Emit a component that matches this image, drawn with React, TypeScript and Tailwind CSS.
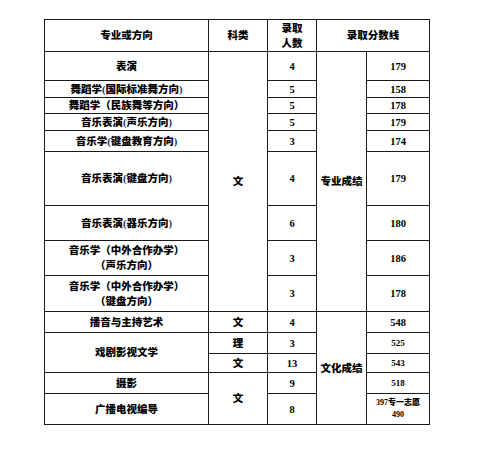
const cell = 'border border-[#1a1a1a] p-0 text-center align-middle'

function P({ children }: { children: string }) {
  // half-width brackets render with a faint blue fringe in the source
  return <span className="text-[#22306a]">{children}</span>
}

export default function App() {
  return (
    <div className="min-h-[462px] w-[484px] bg-white pl-[44px] pt-[19px] font-['Liberation_Serif','Noto_Sans_CJK_SC',serif] text-[10.5px] font-black leading-[15px] text-black">
      <table className="w-[385px] table-fixed border-collapse">
        <colgroup>
          <col className="w-[164px]" />
          <col className="w-[59px]" />
          <col className="w-[49px]" />
          <col className="w-[50px]" />
          <col className="w-[63px]" />
        </colgroup>
        <tbody>
          <tr className="h-[32px]">
            <td className={cell}>专业或方向</td>
            <td className={cell}>科类</td>
            <td className={cell}>
              录取
              <br />
              人数
            </td>
            <td className={cell} colSpan={2}>
              录取分数线
            </td>
          </tr>
          <tr className="h-[29px]">
            <td className={cell}>表演</td>
            <td className={cell} rowSpan={9}>
              文
            </td>
            <td className={cell}>4</td>
            <td className={cell} rowSpan={9}>
              专业成绩
            </td>
            <td className={cell}>179</td>
          </tr>
          <tr className="h-[17px]">
            <td className={cell}>
              舞蹈学<P>(</P>国际标准舞方向<P>)</P>
            </td>
            <td className={cell}>5</td>
            <td className={cell}>158</td>
          </tr>
          <tr className="h-[16px]">
            <td className={cell}>舞蹈学（民族舞等方向）</td>
            <td className={cell}>5</td>
            <td className={cell}>178</td>
          </tr>
          <tr className="h-[17px]">
            <td className={cell}>
              音乐表演<P>(</P>声乐方向<P>)</P>
            </td>
            <td className={cell}>5</td>
            <td className={cell}>179</td>
          </tr>
          <tr className="h-[21px]">
            <td className={cell}>
              音乐学<P>(</P>键盘教育方向<P>)</P>
            </td>
            <td className={cell}>3</td>
            <td className={cell}>174</td>
          </tr>
          <tr className="h-[54px]">
            <td className={cell}>
              音乐表演<P>(</P>键盘方向<P>)</P>
            </td>
            <td className={cell}>4</td>
            <td className={cell}>179</td>
          </tr>
          <tr className="h-[35px]">
            <td className={cell}>
              音乐表演<P>(</P>器乐方向<P>)</P>
            </td>
            <td className={cell}>6</td>
            <td className={cell}>180</td>
          </tr>
          <tr className="h-[35px]">
            <td className={cell}>
              音乐学（中外合作办学）
              <br />
              （声乐方向）
            </td>
            <td className={cell}>3</td>
            <td className={cell}>186</td>
          </tr>
          <tr className="h-[36px]">
            <td className={cell}>
              音乐学（中外合作办学）
              <br />
              （键盘方向）
            </td>
            <td className={cell}>3</td>
            <td className={cell}>178</td>
          </tr>
          <tr className="h-[21px]">
            <td className={cell}>播音与主持艺术</td>
            <td className={cell}>文</td>
            <td className={cell}>4</td>
            <td className={cell} rowSpan={5}>
              文化成绩
            </td>
            <td className={cell}>548</td>
          </tr>
          <tr className="h-[21px]">
            <td className={cell} rowSpan={2}>
              戏剧影视文学
            </td>
            <td className={cell}>理</td>
            <td className={cell}>3</td>
            <td className={`${cell} text-[9px]`}>525</td>
          </tr>
          <tr className="h-[19px]">
            <td className={cell}>文</td>
            <td className={cell}>13</td>
            <td className={`${cell} text-[9px]`}>543</td>
          </tr>
          <tr className="h-[21px]">
            <td className={cell}>摄影</td>
            <td className={cell} rowSpan={2}>
              文
            </td>
            <td className={cell}>9</td>
            <td className={`${cell} text-[9px]`}>518</td>
          </tr>
          <tr className="h-[31px]">
            <td className={cell}>广播电视编导</td>
            <td className={cell}>8</td>
            <td className={`${cell} text-[8px] leading-[12px]`}>
              397专一志愿
              <br />
              490
            </td>
          </tr>
        </tbody>
      </table>
    </div>
  )
}
